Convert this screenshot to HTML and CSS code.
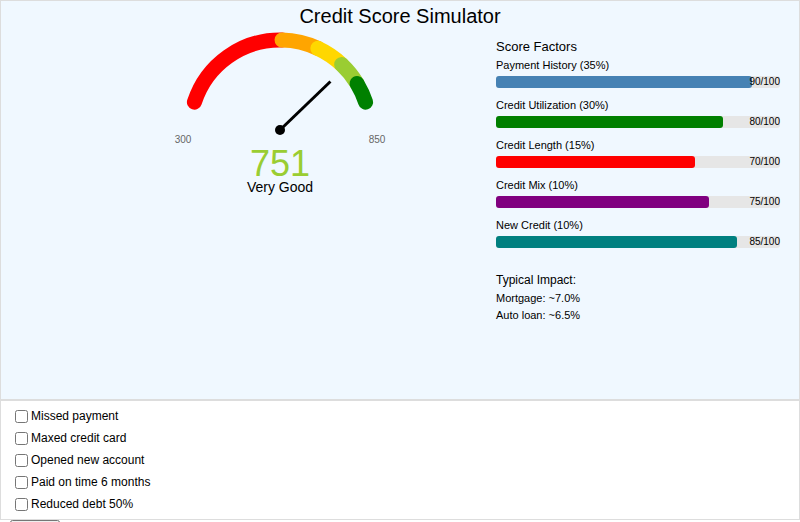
FILE: index.html
```html
<!DOCTYPE html>
<html>
<head>
<meta charset="utf-8">
<link rel="stylesheet" href="styles.css">
</head>
<body>
<div class="sim">
  <h1 class="title">Credit Score Simulator</h1>
  <div class="main">
    <div class="gauge-col">
      <div class="gauge">
        <svg class="gauge-svg" width="220" height="118" viewBox="0 0 220 118">
          <g fill="none" stroke-width="15" stroke-linecap="round">
            <path d="M24.405 72.189 A90 90 0 0 1 112.056 10.023" stroke="#ff0000"/>
            <path d="M112.056 10.023 A90 90 0 0 1 147.852 18.348" stroke="#ffa500"/>
            <path d="M147.852 18.348 A90 90 0 0 1 171.647 34.429" stroke="#ffd700"/>
            <path d="M171.647 34.429 A90 90 0 0 1 187.072 53.528" stroke="#9acd32"/>
            <path d="M187.072 53.528 A90 90 0 0 1 195.595 72.189" stroke="#008000"/>
          </g>
          <line x1="110" y1="100" x2="160.43" y2="51.46" stroke="#000" stroke-width="3"/>
          <circle cx="110" cy="100" r="5" fill="#000"/>
          <text x="13" y="113" class="gauge-label" text-anchor="middle">300</text>
          <text x="207" y="113" class="gauge-label" text-anchor="middle">850</text>
        </svg>
        <div class="score">751</div>
        <div class="rating">Very Good</div>
      </div>
    </div>
    <div class="factors-col">
      <div class="factors-title">Score Factors</div>
      <div class="factor">
        <div class="factor-label">Payment History (35%)</div>
        <div class="bar"><div class="fill fill-blue" style="width:90%"></div><span class="value">90/100</span></div>
      </div>
      <div class="factor">
        <div class="factor-label">Credit Utilization (30%)</div>
        <div class="bar"><div class="fill fill-green" style="width:80%"></div><span class="value">80/100</span></div>
      </div>
      <div class="factor">
        <div class="factor-label">Credit Length (15%)</div>
        <div class="bar"><div class="fill fill-red" style="width:70%"></div><span class="value">70/100</span></div>
      </div>
      <div class="factor">
        <div class="factor-label">Credit Mix (10%)</div>
        <div class="bar"><div class="fill fill-purple" style="width:75%"></div><span class="value">75/100</span></div>
      </div>
      <div class="factor">
        <div class="factor-label">New Credit (10%)</div>
        <div class="bar"><div class="fill fill-teal" style="width:85%"></div><span class="value">85/100</span></div>
      </div>
      <div class="impact-title">Typical Impact:</div>
      <div class="impact-line">Mortgage: ~7.0%</div>
      <div class="impact-line">Auto loan: ~6.5%</div>
    </div>
  </div>
</div>
<div class="events">
  <label class="event"><input type="checkbox" class="check">Missed payment</label>
  <label class="event"><input type="checkbox" class="check">Maxed credit card</label>
  <label class="event"><input type="checkbox" class="check">Opened new account</label>
  <label class="event"><input type="checkbox" class="check">Paid on time 6 months</label>
  <label class="event"><input type="checkbox" class="check">Reduced debt 50%</label>
</div>
<div class="actions">
  <button class="btn">Reset</button>
</div>
</body>
</html>
```

FILE: styles.css
```css
html, body {
  margin: 0;
  padding: 0;
  background: #fff;
  font-family: "Liberation Sans", Arial, sans-serif;
  color: #000;
}

.sim {
  box-sizing: border-box;
  height: 400px;
  border: 1px solid #ddd;
  background: #f0f8ff;
  padding-top: 4px;
}

.title {
  margin: 0;
  font-size: 20px;
  line-height: 23px;
  font-weight: normal;
  text-align: center;
}

.main {
  display: flex;
}

.gauge-col {
  width: 495px;
}

.gauge {
  width: 220px;
  margin-left: 169px;
  margin-top: 2px;
  text-align: center;
}

.gauge-svg {
  display: block;
}

.gauge-label {
  font-family: "Liberation Sans", Arial, sans-serif;
  font-size: 10px;
  fill: #666;
}

.score {
  font-size: 36px;
  line-height: 32px;
  color: #9acd32;
}

.rating {
  font-size: 14px;
  line-height: 14px;
}

.factors-col {
  width: 284px;
}

.factors-title {
  font-size: 13px;
  line-height: 15px;
  margin-top: 11px;
  margin-bottom: 5px;
}

.factor {
  margin-bottom: 11px;
}

.factor-label {
  font-size: 11px;
  line-height: 13px;
  margin-bottom: 4px;
}

.bar {
  position: relative;
  height: 12px;
  background: #e6e6e6;
  border-radius: 3px;
}

.fill {
  height: 100%;
  border-radius: 3px;
}

.fill-blue { background: #4682b4; }
.fill-green { background: #008000; }
.fill-red { background: #ff0000; }
.fill-purple { background: #800080; }
.fill-teal { background: #008080; }

.value {
  position: absolute;
  right: 0;
  top: 0;
  font-size: 10px;
  line-height: 12px;
}

.impact-title {
  font-size: 12px;
  line-height: 14px;
  margin-top: 25px;
  margin-bottom: 3px;
}

.impact-line {
  font-size: 11px;
  line-height: 16.5px;
}

.events {
  box-sizing: border-box;
  border: 1px solid #ddd;
  background: #fff;
  padding: 4px 10px;
}

.event {
  display: flex;
  align-items: center;
  height: 22px;
  font-size: 12px;
}

.check {
  width: 13px;
  height: 13px;
  margin: 0 3px 0 4px;
}

.actions {
  padding-left: 10px;
}

.btn {
  width: 50px;
  font-size: 13px;
  font-family: "Liberation Sans", Arial, sans-serif;
}
```
